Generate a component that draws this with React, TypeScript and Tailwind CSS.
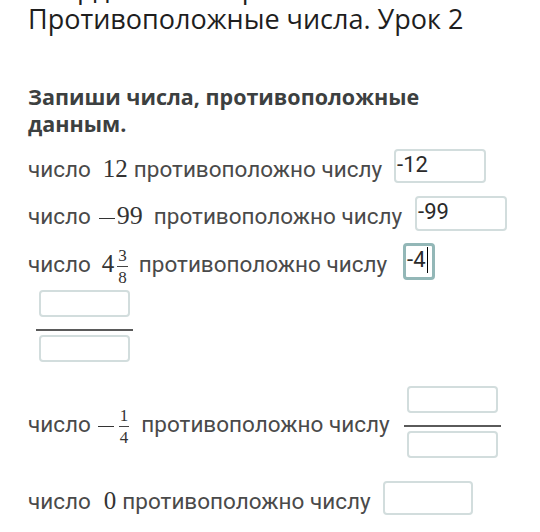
import React from "react";

const mathCls = "font-['Liberation_Serif',serif] text-[25px] text-[#333]";

function Minus({ cls }: { cls: string }) {
  return <span className={"inline-block w-[16px] h-[1.5px] bg-[#333] align-middle " + cls} />;
}

function Frac({ n, d, ml }: { n: string; d: string; ml: string }) {
  return (
    <span
      className={
        "inline-flex flex-col items-center align-middle mr-[2px] font-['Liberation_Serif',serif] text-[17px] leading-[17px] text-[#333] " +
        ml
      }
    >
      <span className="px-[1px]">{n}</span>
      <span className="block w-full h-[1px] bg-[#444] my-[2px]" />
      <span className="px-[1px]">{d}</span>
    </span>
  );
}

function Box({
  w,
  h,
  children,
  focused,
}: {
  w: string;
  h: string;
  children?: React.ReactNode;
  focused?: boolean;
}) {
  return (
    <div
      className={
        (focused
          ? "border-[3px] border-[#93b7b7] "
          : "border-2 border-[#d2dddd] ") +
        "bg-white rounded-[4px] shrink-0 flex items-start pl-[1px] pt-[1px] font-['Roboto',sans-serif] text-[22px] leading-[26px] text-[#2a2a2a] " +
        w +
        " " +
        h
      }
    >
      {children}
    </div>
  );
}

function FracInputs({ ml }: { ml: string }) {
  return (
    <div className={"flex flex-col items-center w-[97px] shrink-0 " + ml}>
      <div className="w-[91px] h-[27px] border-2 border-[#d2dddd] rounded-[4px] bg-white" />
      <div className="w-[97px] h-[2px] bg-[#5a5a5a] mt-[12px]" />
      <div className="w-[91px] h-[27px] border-2 border-[#d2dddd] rounded-[4px] bg-white mt-[4px]" />
    </div>
  );
}

export default function App() {
  return (
    <div className="w-[540px] h-[532px] overflow-hidden bg-white pl-[28px] font-['Roboto',sans-serif] text-[#4a4a4a]">
      <h1 className="mt-[-28px] font-['Open_Sans',sans-serif] text-[27px] leading-[31px] text-[#1e1e1e] font-normal">
        Координатная прямая.
        <br />
        Противоположные числа. Урок 2
      </h1>

      <h2 className="mt-[49px] font-['Open_Sans',sans-serif] font-bold text-[21.5px] leading-[27px] text-[#3c4040]">
        Запиши числа, противоположные
        <br />
        данным.
      </h2>

      {/* row 1 */}
      <div className="flex items-start h-[34px] mt-[12px]">
        <div className="mt-[8px] text-[22.5px] leading-[24px] whitespace-nowrap">
          число<span className={mathCls + " ml-[12px] mr-[6px]"}>12</span>противоположно числу
        </div>
        <div className="ml-[12px]">
          <Box w="w-[92px]" h="h-[34px]">-12</Box>
        </div>
      </div>

      {/* row 2 */}
      <div className="flex items-start h-[35px] mt-[13px]">
        <div className="mt-[8px] text-[22.5px] leading-[24px] whitespace-nowrap">
          число<span className={mathCls + " ml-[8px] mr-[11px]"}><Minus cls="mr-[2px]" /><span className="text-[26px]">99</span></span>противоположно числу
        </div>
        <div className="ml-[13px]">
          <Box w="w-[92px]" h="h-[35px]">-99</Box>
        </div>
      </div>

      {/* row 3 */}
      <div className="flex items-start h-[37px] mt-[12px]">
        <div className="mt-[4px] text-[22.5px] leading-[24px] whitespace-nowrap">
          число<span className={mathCls + " ml-[11px]"}>4</span>
          <Frac n="3" d="8" ml="ml-[3px]" />
          <span className="ml-[9px]">противоположно числу</span>
        </div>
        <div className="ml-[16px]">
          <Box w="w-[32px]" h="h-[37px]" focused>
            <span className="flex items-center">
              -4<span className="inline-block w-[1px] h-[26px] bg-black ml-[1px]" />
            </span>
          </Box>
        </div>
      </div>

      <div className="mt-[10px] flex">
        <FracInputs ml="ml-[8px]" />
      </div>

      {/* row 4 */}
      <div className="flex items-start h-[72px] mt-[24px]">
        <div className="mt-[21px] text-[22.5px] leading-[24px] whitespace-nowrap">
          число<span className={mathCls + " ml-[7px]"}><Minus cls="" /></span>
          <Frac n="1" d="4" ml="ml-[5px]" />
          <span className="ml-[10px]">противоположно числу</span>
        </div>
        <FracInputs ml="ml-[14px]" />
      </div>

      {/* row 5 */}
      <div className="flex items-start h-[34px] mt-[23px]">
        <div className="mt-[8px] text-[22.5px] leading-[24px] whitespace-nowrap">
          число<span className={mathCls + " ml-[13px] mr-[6px]"}>0</span>противоположно числу
        </div>
        <div className="ml-[12px]">
          <Box w="w-[90px]" h="h-[34px]" />
        </div>
      </div>
    </div>
  );
}
